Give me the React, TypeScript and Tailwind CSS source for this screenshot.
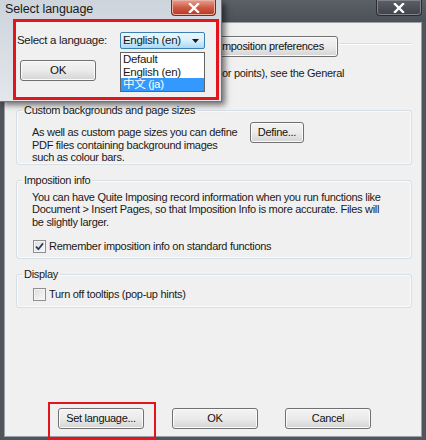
import React from "react";

function WinButton({ label, className = "" }: { label: string; className?: string }) {
  return (
    <div
      className={`flex h-[21px] items-center justify-center rounded-[3px] border border-[#707070] bg-linear-to-b from-[#f3f3f3] via-[#ebebeb] to-[#d4d4d4] text-[#111] shadow-[inset_0_0_0_1px_#fbfbfb] ${className}`}
    >
      {label}
    </div>
  );
}

function CheckBox({ checked }: { checked?: boolean }) {
  return (
    <div className="flex h-[13px] w-[13px] shrink-0 items-center justify-center border border-[#8e8f8f] bg-linear-to-br from-[#dcdcdc] to-[#fafafa] shadow-[inset_0_0_0_1px_#f4f4f4]">
      {checked && (
        <svg width="9" height="9" viewBox="0 0 9 9">
          <path d="M1 4.6 L3.4 7.2 L8 1.4" fill="none" stroke="#2a3a5c" strokeWidth="1.7" />
        </svg>
      )}
    </div>
  );
}

function GroupBox({
  title,
  className = "",
  children,
}: {
  title: string;
  className?: string;
  children: React.ReactNode;
}) {
  return (
    <fieldset className={`rounded-[3px] border border-[#d5dfe5] shadow-[inset_0_0_0_1px_#fafafa] ${className}`}>
      <legend className="ml-[5px] px-[2px] leading-[13px]">{title}</legend>
      {children}
    </fieldset>
  );
}

export default function App() {
  return (
    <div className="relative h-[440px] w-[426px] overflow-hidden bg-[#50555c] font-['Liberation_Sans',Arial,sans-serif] text-[11px] tracking-[-0.3px] text-[#1a1a1a]">
      {/* main window caption */}
      <div className="flex h-[22px] justify-end bg-linear-to-b from-[#5b6067] to-[#4c5057] pr-[4px]">
        <div className="flex h-[16px] w-[46px] items-center justify-center rounded-b-[4px] border border-t-0 border-[#2b2d31] bg-linear-to-b from-[#5d6066] to-[#3f4247] shadow-[inset_0_0_0_1px_#80848a]">
          <svg width="12" height="10" viewBox="0 0 12 10">
            <path d="M2 1 L10 9 M10 1 L2 9" stroke="#fff" strokeWidth="2.4" strokeLinecap="square" />
          </svg>
        </div>
      </div>

      {/* main window client area */}
      <div className="mx-[4px] h-[415px] border border-[#9aa0a7] bg-[#f0f0f0]">
        <div className="mt-[13px] flex items-center">
          <WinButton label="Imposition preferences" className="ml-[200px] w-[133px]" />
          <div className="mb-[5px] ml-[1px] mr-[10px] h-[2px] flex-1 border-t border-b border-t-[#d5dfe5] border-b-white" />
        </div>
        <p className="ml-[217px] mt-[10px] leading-[13px]">or points), see the General</p>

        <GroupBox title="Custom backgrounds and page sizes" className="ml-[11px] mr-[9px] mt-[24px] pt-[5px]">
          <div className="flex items-start">
            <p className="ml-[15px] mt-[4px] w-[218px] leading-[12.5px]">
              As well as custom page sizes you can define
              <br />
              PDF files containing background images
              <br />
              such as colour bars.
            </p>
            <WinButton label="Define..." className="w-[54px]" />
          </div>
        </GroupBox>

        <GroupBox title="Imposition info" className="ml-[11px] mr-[9px] mt-[9px] pb-[5px] pt-[4px]">
          <p className="ml-[15px] leading-[12.5px]">
            You can have Quite Imposing record information when you run functions like
            <br />
            Document &gt; Insert Pages, so that Imposition Info is more accurate. Files will
            <br />
            be slightly larger.
          </p>
          <div className="ml-[16px] mt-[12px] flex items-center gap-[3px] leading-[13px]">
            <CheckBox checked />
            <span>Remember imposition info on standard functions</span>
          </div>
        </GroupBox>

        <GroupBox title="Display" className="ml-[11px] mr-[9px] mt-[9px] pb-[6px] pt-[7px]">
          <div className="ml-[16px] flex items-center gap-[3px] leading-[13px]">
            <CheckBox />
            <span>Turn off tooltips (pop-up hints)</span>
          </div>
        </GroupBox>

        <div className="ml-[43px] mt-[94px] flex items-start">
          <div className="border-2 border-[#e3141c] pb-[8px] pl-[8px] pr-[10px] pt-[4px]">
            <WinButton label="Set language..." className="w-[86px]" />
          </div>
          <WinButton label="OK" className="ml-[16px] mt-[6px] w-[86px]" />
          <WinButton label="Cancel" className="ml-[27px] mt-[6px] w-[86px]" />
        </div>
      </div>

      {/* Select language dialog */}
      <div className="absolute left-0 top-0 flex h-[102px] w-[222px] flex-col border-r border-b border-[#6e747b] bg-linear-to-b from-[#cdd4dc] to-[#e3e7eb] shadow-[3px_3px_6px_rgba(0,0,0,0.55)]">
        <div className="relative h-[19px] shrink-0">
          <span className="absolute left-[5px] top-[2px] text-[12.5px] leading-[15px] tracking-[-0.1px] text-[#1a1a1a]">
            Select language
          </span>
          <div className="absolute right-[5px] top-0 flex h-[16px] w-[45px] items-center justify-center rounded-b-[4px] border border-t-0 border-[#7b2a22] bg-linear-to-b from-[#e3a190] via-[#cf5b45] to-[#b8321f] shadow-[inset_0_0_0_1px_#eab2a4]">
            <svg width="12" height="10" viewBox="0 0 12 10">
              <path d="M2 1 L10 9 M10 1 L2 9" stroke="#fff" strokeWidth="2.4" strokeLinecap="square" />
            </svg>
          </div>
        </div>
        <div className="pl-[13px] pr-[2px]">
          <div className="relative h-[81px] border-[3px] border-[#e3141c] bg-[#f0f0f0]">
            <div className="mt-[10px] flex items-center">
              <span className="ml-[1px] w-[103px] text-[11.5px] leading-[13px]">Select a language:</span>
              <div className="flex h-[17px] w-[85px] items-center justify-between rounded-[2px] border border-[#3c7fb1] bg-linear-to-b from-[#eaf6fd] via-[#d9f0fc] to-[#a7d9f5] pl-[2px] pr-[5px] text-[11.5px] leading-[13px]">
                <span>English (en)</span>
                <svg width="7" height="4" viewBox="0 0 7 4">
                  <path d="M0 0 H7 L3.5 4 Z" fill="#1a1a1a" />
                </svg>
              </div>
            </div>
            <div className="absolute left-[104px] top-[30px] w-[85px] border border-[#646464] bg-white text-[11.5px] leading-[12.5px]">
              <div className="h-[12.5px] pl-[2px]">Default</div>
              <div className="h-[12.5px] pl-[2px]">English (en)</div>
              <div className="h-[12.5px] bg-[#3399ff] pl-[2px] text-white font-['Liberation_Sans','Noto_Sans_CJK_SC',sans-serif]">
                中文 (ja)
              </div>
            </div>
            <WinButton
              label="OK"
              className="ml-[4px] mt-[11px] w-[76px] border-[#3c7fb1] shadow-[inset_0_0_0_1px_#c0e4f7] text-[11.5px]"
            />
          </div>
        </div>
      </div>
    </div>
  );
}
